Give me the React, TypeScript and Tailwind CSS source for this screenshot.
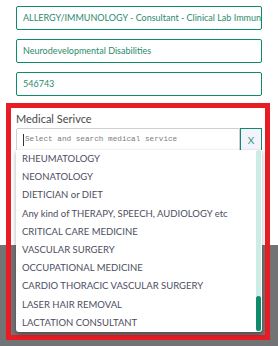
import React from "react";

const services = [
  "RHEUMATOLOGY",
  "NEONATOLOGY",
  "DIETICIAN or DIET",
  "Any kind of THERAPY, SPEECH, AUDIOLOGY etc",
  "CRITICAL CARE MEDICINE",
  "VASCULAR SURGERY",
  "OCCUPATIONAL MEDICINE",
  "CARDIO THORACIC VASCULAR SURGERY",
  "LASER HAIR REMOVAL",
  "LACTATION CONSULTANT",
];

function FilledField({ value }: { value: string }) {
  return (
    <div className="flex h-[24px] items-center overflow-hidden whitespace-nowrap rounded-[2px] border border-[#0f8a6b] px-[6px] text-[9px] text-[#2b8a6e]">
      {value}
    </div>
  );
}

export default function App() {
  return (
    <div className="relative h-[346px] w-[278px] overflow-hidden bg-[#717375] font-['Lato',sans-serif]">
      <div className="flex h-[245px] flex-col bg-white px-4 pt-[6px]">
        <div className="flex flex-col gap-[9px]">
          <FilledField value="ALLERGY/IMMUNOLOGY - Consultant - Clinical Lab Immunol" />
          <FilledField value="Neurodevelopmental Disabilities" />
          <FilledField value="546743" />
        </div>

        <div className="relative mt-[16px]">
          <label className="block text-[11px] leading-[14px] text-[#4a4a4a]">Medical Serivce</label>
          <div className="mt-[2px] flex h-[24px]">
            <div className="flex flex-1 items-center rounded-l-[2px] border border-[#cfcfcf] px-[6px]">
              <span className="mr-[1px] h-[12px] w-px bg-[#333]" />
              <span className="font-['Liberation_Mono',monospace] text-[7.7px] text-[#7d7d7d]">
                Select and search medical service
              </span>
            </div>
            <button
              type="button"
              className="flex w-[22px] items-center justify-center border border-[#0f8a6b] bg-[#f4f2fb] text-[10px] text-[#2b9a7c]"
            >
              X
            </button>
          </div>

          {/* dropdown menu */}
          <div className="absolute left-0 top-[38px] z-10 flex h-[182px] w-[246px] rounded-b-[3px] bg-white shadow-[0_2px_4px_rgba(0,0,0,0.35)]">
            <ul className="flex flex-1 flex-col pl-[6px]">
              {services.map((s) => (
                <li
                  key={s}
                  className="flex h-[18.4px] items-center whitespace-nowrap text-[9.5px] text-[#4d4d60]"
                >
                  {s}
                </li>
              ))}
            </ul>
            <div className="mr-[1px] flex w-[5px] flex-col justify-end rounded-full bg-[#ccede5] pb-[1px]">
              <div className="h-[35px] rounded-full bg-[#0f8a6b]" />
            </div>
          </div>
        </div>
      </div>

      {/* annotation highlight */}
      <div className="pointer-events-none absolute left-[6px] top-[103px] h-[237px] w-[264px] border-[5px] border-[#e81c24]" />
    </div>
  );
}
